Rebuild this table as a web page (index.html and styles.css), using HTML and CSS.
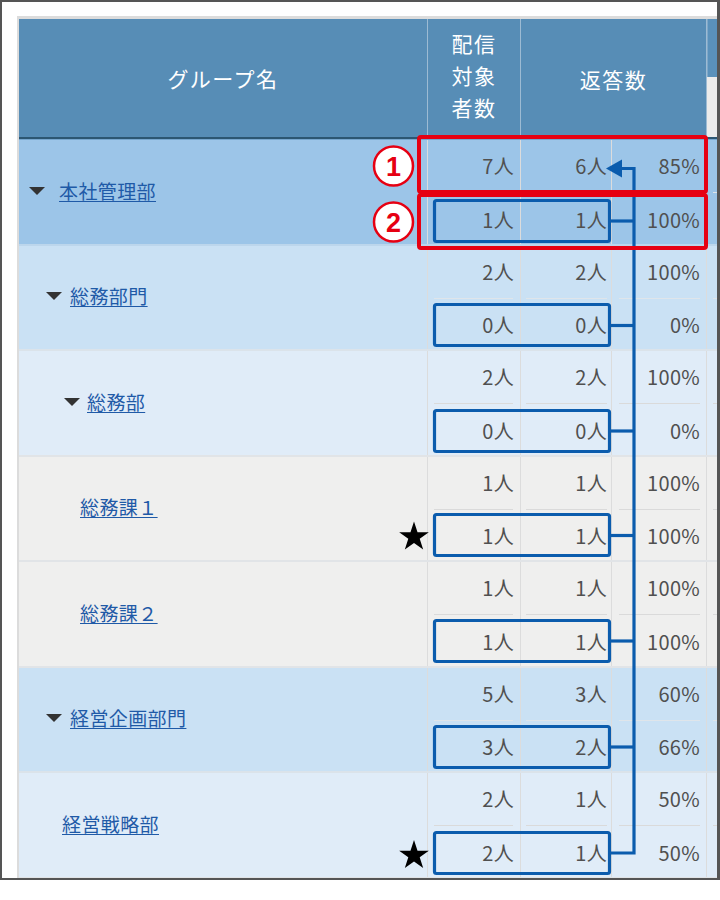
FILE: index.html
```html
<!DOCTYPE html>
<html lang="ja">
<head>
<meta charset="utf-8">
<title>グループ別返答数</title>
<link rel="stylesheet" href="styles.css">
</head>
<body>
<div class="frame">
  <div class="panel">
    <div class="thead">
      <div class="th th-name">グループ名</div>
      <div class="th th-target"><span>配信</span><span>対象</span><span>者数</span></div>
      <div class="th th-answer">返答数</div>
      <div class="th th-extra"><div class="extra-top"></div><div class="extra-bottom"></div></div>
    </div>

    <div class="row l0 first">
      <div class="name ind0"><span class="tri g14"></span><a href="#">本社管理部</a></div>
      <div class="cell c2"><div class="sub1">7人</div><div class="sep"></div><div class="sub2">1人</div></div>
      <div class="cell c3"><div class="sub1">6人</div><div class="sep"></div><div class="sub2">1人</div></div>
      <div class="cell c4"><div class="sub1">85%</div><div class="sep"></div><div class="sub2">100%</div></div>
      <div class="cell c5"><div class="sub1"></div><div class="sep"></div><div class="sub2"></div></div>
    </div>

    <div class="row l1">
      <div class="name ind1"><span class="tri g8"></span><a href="#">総務部門</a></div>
      <div class="cell c2"><div class="sub1">2人</div><div class="sep"></div><div class="sub2">0人</div></div>
      <div class="cell c3"><div class="sub1">2人</div><div class="sep"></div><div class="sub2">0人</div></div>
      <div class="cell c4"><div class="sub1">100%</div><div class="sep"></div><div class="sub2">0%</div></div>
      <div class="cell c5"><div class="sub1"></div><div class="sep"></div><div class="sub2"></div></div>
    </div>

    <div class="row l2">
      <div class="name ind2"><span class="tri g7"></span><a href="#">総務部</a></div>
      <div class="cell c2"><div class="sub1">2人</div><div class="sep"></div><div class="sub2">0人</div></div>
      <div class="cell c3"><div class="sub1">2人</div><div class="sep"></div><div class="sub2">0人</div></div>
      <div class="cell c4"><div class="sub1">100%</div><div class="sep"></div><div class="sub2">0%</div></div>
      <div class="cell c5"><div class="sub1"></div><div class="sep"></div><div class="sub2"></div></div>
    </div>

    <div class="row l3">
      <div class="name ind3"><a href="#">総務課１</a></div>
      <div class="cell c2"><div class="sub1">1人</div><div class="sep"></div><div class="sub2">1人</div></div>
      <div class="cell c3"><div class="sub1">1人</div><div class="sep"></div><div class="sub2">1人</div></div>
      <div class="cell c4"><div class="sub1">100%</div><div class="sep"></div><div class="sub2">100%</div></div>
      <div class="cell c5"><div class="sub1"></div><div class="sep"></div><div class="sub2"></div></div>
    </div>

    <div class="row l3">
      <div class="name ind3"><a href="#">総務課２</a></div>
      <div class="cell c2"><div class="sub1">1人</div><div class="sep"></div><div class="sub2">1人</div></div>
      <div class="cell c3"><div class="sub1">1人</div><div class="sep"></div><div class="sub2">1人</div></div>
      <div class="cell c4"><div class="sub1">100%</div><div class="sep"></div><div class="sub2">100%</div></div>
      <div class="cell c5"><div class="sub1"></div><div class="sep"></div><div class="sub2"></div></div>
    </div>

    <div class="row l1">
      <div class="name ind1"><span class="tri g8"></span><a href="#">経営企画部門</a></div>
      <div class="cell c2"><div class="sub1">5人</div><div class="sep"></div><div class="sub2">3人</div></div>
      <div class="cell c3"><div class="sub1">3人</div><div class="sep"></div><div class="sub2">2人</div></div>
      <div class="cell c4"><div class="sub1">60%</div><div class="sep"></div><div class="sub2">66%</div></div>
      <div class="cell c5"><div class="sub1"></div><div class="sep"></div><div class="sub2"></div></div>
    </div>

    <div class="row l2">
      <div class="name ind2leaf"><a href="#">経営戦略部</a></div>
      <div class="cell c2"><div class="sub1">2人</div><div class="sep"></div><div class="sub2">2人</div></div>
      <div class="cell c3"><div class="sub1">1人</div><div class="sep"></div><div class="sub2">1人</div></div>
      <div class="cell c4"><div class="sub1">50%</div><div class="sep"></div><div class="sub2">50%</div></div>
      <div class="cell c5"><div class="sub1"></div><div class="sep"></div><div class="sub2"></div></div>
    </div>
  </div>
</div>

<svg class="overlay" width="720" height="900" viewBox="0 0 720 900" xmlns="http://www.w3.org/2000/svg">
  <g fill="none" stroke="#0b5cad" stroke-width="3.2">
    <rect x="434.5" y="200.5" width="175" height="41" rx="2"/>
    <rect x="434.5" y="304.5" width="175" height="41" rx="2"/>
    <rect x="434.5" y="410.5" width="175" height="41" rx="2"/>
    <rect x="434.5" y="514.5" width="175" height="41" rx="2"/>
    <rect x="434.5" y="620.5" width="175" height="41" rx="2"/>
    <rect x="434.5" y="726.5" width="175" height="41" rx="2"/>
    <rect x="434.5" y="832.5" width="175" height="41" rx="2"/>
    <path d="M611 221 H634"/>
    <path d="M611 325.5 H634"/>
    <path d="M611 431 H634"/>
    <path d="M611 535.5 H634"/>
    <path d="M611 641 H634"/>
    <path d="M611 747 H634"/>
    <path d="M611 853 H634 V168.5 H620" stroke-linejoin="miter"/>
  </g>
  <polygon points="606,168.5 622,159.5 622,177.5" fill="#0b5cad"/>

  <g fill="none" stroke="#e60012" stroke-width="4">
    <rect x="419" y="137" width="287" height="55" rx="2"/>
    <rect x="419" y="195" width="287" height="53" rx="2"/>
  </g>

  <g class="badge">
    <circle cx="393.5" cy="166" r="19.5" fill="#fff" stroke="#e60012" stroke-width="2.5"/>
    <text x="393.5" y="175.7" text-anchor="middle" class="badge-num">1</text>
    <circle cx="393.5" cy="222" r="19.5" fill="#fff" stroke="#e60012" stroke-width="2.5"/>
    <text x="393.5" y="231.7" text-anchor="middle" class="badge-num">2</text>
  </g>

  <g fill="#000">
    <polygon transform="translate(414 537)" points="0,-15.6 3.53,-4.85 14.84,-4.82 5.71,1.85 9.17,12.62 0,6 -9.17,12.62 -5.71,1.85 -14.84,-4.82 -3.53,-4.85"/>
    <polygon transform="translate(414 855.5)" points="0,-15.6 3.53,-4.85 14.84,-4.82 5.71,1.85 9.17,12.62 0,6 -9.17,12.62 -5.71,1.85 -14.84,-4.82 -3.53,-4.85"/>
  </g>
</svg>
</body>
</html>
```

FILE: styles.css
```css
html, body {
  margin: 0;
  padding: 0;
  background: #ffffff;
}

body {
  position: relative;
  width: 720px;
  height: 900px;
  font-family: "Noto Sans CJK JP", "Noto Sans", sans-serif;
}

.frame {
  box-sizing: border-box;
  width: 720px;
  height: 880px;
  border: 2px solid #555555;
  border-right-width: 3px;
  padding: 14px 0 0 15px;
  overflow: hidden;
  background: #ffffff;
}

.panel {
  width: 760px;
  border-top: 3px solid #dcdcdc;
  border-left: 2px solid #dcdcdc;
  display: flex;
  flex-direction: column;
}

/* header */
.thead {
  display: grid;
  grid-template-columns: 409px 93px 186px 1fr;
  height: 118px;
  background: #578db6;
  border-bottom: 2px solid #2c5672;
  color: #ffffff;
}

.th {
  box-sizing: border-box;
  display: flex;
  align-items: center;
  justify-content: center;
  border-right: 1px solid #9dbbd3;
  font-size: 21px;
  letter-spacing: 1.5px;
  line-height: 1;
}

.th-name {
  padding-top: 1px;
}

.th-target {
  flex-direction: column;
  padding-bottom: 6px;
}

.th-target span {
  display: block;
  height: 32px;
  line-height: 32px;
}

.th-answer {
  padding-top: 3px;
}

.th-extra {
  flex-direction: column;
  align-items: stretch;
  justify-content: flex-start;
  border-right: none;
}

.extra-top {
  height: 58px;
  background: #5a91bb;
  border-left: 1px solid #7ea8c9;
}

.extra-bottom {
  flex: 1;
  background: #ebebeb;
}

/* rows */
.row {
  display: grid;
  grid-template-columns: 409px 93px 91px 95px 1fr;
  height: 103.5px;
  border-bottom: 2px solid #e1e4e7;
}

.row.first {
  border-top: 1px solid #76a6ce;
}

.l0 { background: #9cc5e8; }
.l1 { background: #cae1f4; }
.l2 { background: #e0ecf8; }
.l3 { background: #efefee; }

.l0 { border-bottom-color: #bcd6ec; }
.l1 { border-bottom-color: #dbe3ea; }

.name {
  box-sizing: border-box;
  display: flex;
  align-items: center;
  border-right: 1px solid #dcdcdc;
  font-size: 19px;
  letter-spacing: 0.4px;
  line-height: 1;
  padding-bottom: 3px;
}

.name a {
  color: #1f5aa7;
  text-decoration: underline;
  text-underline-offset: 2px;
}

.ind0 { padding-left: 10px; }
.ind1 { padding-left: 27px; }
.ind2 { padding-left: 45px; }
.ind3 { padding-left: 61px; }
.ind2leaf { padding-left: 43px; }

.tri {
  width: 0;
  height: 0;
  border-left: 8px solid transparent;
  border-right: 8px solid transparent;
  border-top: 8px solid #333333;
  margin-top: 1px;
}

.g14 { margin-right: 14px; }
.g8 { margin-right: 8px; }
.g7 { margin-right: 7px; }

.cell {
  box-sizing: border-box;
  display: flex;
  flex-direction: column;
  border-right: 1px solid #dcdcdc;
  color: #505050;
  font-size: 20px;
  letter-spacing: 0.3px;
  line-height: 1;
}

.c5 { border-right: none; }

.sub1 {
  height: 52px;
  display: flex;
  align-items: center;
  justify-content: flex-end;
}

.sub2 {
  flex: 1;
  display: flex;
  align-items: center;
  justify-content: flex-end;
  padding-top: 3px;
}

.sep {
  height: 1px;
  background: #dadada;
  margin: 0 6px;
}

.c2 .sub1, .c2 .sub2 { padding-right: 6px; }
.c3 .sub1, .c3 .sub2 { padding-right: 4px; }
.c4 .sub1, .c4 .sub2 { padding-right: 6px; }
.c2 .sep { margin: 0 7px 0 6px; }
.c3 .sep { margin: 0 4px 0 5px; }
.c4 .sep { margin: 0 6px 0 7px; }

.l0 .sep, .l1 .sep { background: #dfe5ea; }

/* annotation overlay */
.overlay {
  position: absolute;
  top: 0;
  left: 0;
  pointer-events: none;
}

.badge-num {
  font-family: "Liberation Sans", Arial, sans-serif;
  font-size: 27px;
  font-weight: 700;
  fill: #e60012;
}
```
